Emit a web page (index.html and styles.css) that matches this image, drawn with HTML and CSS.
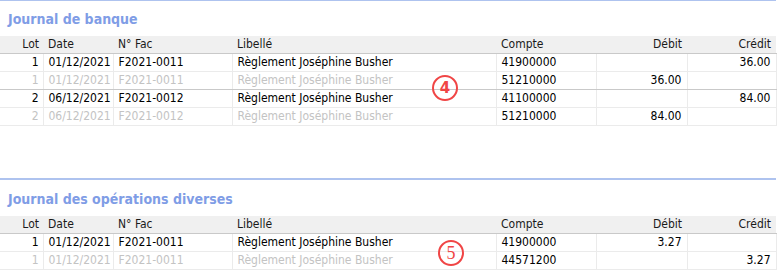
FILE: index.html
```html
<!DOCTYPE html>
<html lang="fr">
<head>
<meta charset="utf-8">
<title>Journaux</title>
<link rel="stylesheet" href="styles.css">
</head>
<body>
<div class="page">
  <section class="journal journal-first">
    <h2 class="title">Journal de banque</h2>
    <table class="grid">
      <colgroup>
        <col class="c-lot"><col class="c-date"><col class="c-fac"><col class="c-lib"><col class="c-cpt"><col class="c-deb"><col class="c-cre">
      </colgroup>
      <thead>
        <tr><th class="num">Lot</th><th>Date</th><th>N° Fac</th><th>Libellé</th><th>Compte</th><th class="num">Débit</th><th class="num">Crédit</th></tr>
      </thead>
      <tbody>
        <tr><td class="num">1</td><td>01/12/2021</td><td>F2021-0011</td><td>Règlement Joséphine Busher</td><td>41900000</td><td class="num"></td><td class="num">36.00</td></tr>
        <tr class="faded group-end"><td class="num">1</td><td>01/12/2021</td><td>F2021-0011</td><td>Règlement Joséphine Busher</td><td>51210000</td><td class="num">36.00</td><td class="num"></td></tr>
        <tr><td class="num">2</td><td>06/12/2021</td><td>F2021-0012</td><td>Règlement Joséphine Busher</td><td>41100000</td><td class="num"></td><td class="num">84.00</td></tr>
        <tr class="faded"><td class="num">2</td><td>06/12/2021</td><td>F2021-0012</td><td>Règlement Joséphine Busher</td><td>51210000</td><td class="num">84.00</td><td class="num"></td></tr>
      </tbody>
    </table>
    <span class="mark mark-4">4</span>
  </section>

  <section class="journal journal-second">
    <h2 class="title">Journal des opérations diverses</h2>
    <table class="grid">
      <colgroup>
        <col class="c-lot"><col class="c-date"><col class="c-fac"><col class="c-lib"><col class="c-cpt"><col class="c-deb"><col class="c-cre">
      </colgroup>
      <thead>
        <tr><th class="num">Lot</th><th>Date</th><th>N° Fac</th><th>Libellé</th><th>Compte</th><th class="num">Débit</th><th class="num">Crédit</th></tr>
      </thead>
      <tbody>
        <tr><td class="num">1</td><td>01/12/2021</td><td>F2021-0011</td><td>Règlement Joséphine Busher</td><td>41900000</td><td class="num">3.27</td><td class="num"></td></tr>
        <tr class="faded"><td class="num">1</td><td>01/12/2021</td><td>F2021-0011</td><td>Règlement Joséphine Busher</td><td>44571200</td><td class="num"></td><td class="num">3.27</td></tr>
      </tbody>
    </table>
    <span class="mark mark-5">5</span>
  </section>
</div>
</body>
</html>
```

FILE: styles.css
```css
html, body {
  margin: 0;
  padding: 0;
  background: #ffffff;
}

body {
  font-family: "DejaVu Sans Condensed", "DejaVu Sans", sans-serif;
  font-size: 12px;
  color: #000000;
  width: 778px;
  height: 272px;
  overflow: hidden;
}

.page {
  width: 776px;
}

.journal {
  position: relative;
  border-top: 2px solid #aec3ef;
}

.journal-first {
  margin-top: -1px;
}

.journal-second {
  margin-top: 52px;
}

.title {
  margin: 0 0 7px 0;
  padding: 8px 0 0 8px;
  height: 20px;
  line-height: 20px;
  font-size: 14px;
  font-weight: bold;
  color: #7f9de6;
}

.journal-second .title {
  padding-top: 9px;
}

.grid {
  width: 776px;
  border-collapse: collapse;
  table-layout: fixed;
}

.c-lot { width: 43px; }
.c-date { width: 70px; }
.c-fac { width: 119px; }
.c-lib { width: 264px; }
.c-cpt { width: 100px; }
.c-deb { width: 91px; }
.c-cre { width: 89px; }

.grid th,
.grid td {
  height: 17px;
  line-height: 17px;
  padding: 0 5px;
  text-align: left;
  white-space: nowrap;
  overflow: hidden;
}

.grid th {
  font-weight: normal;
  background: #f0f0f0;
  color: #1a1a1a;
  border-bottom: 1px solid #c9c9c9;
}

.grid td {
  border-bottom: 1px solid #ebebeb;
  border-left: 1px solid #ebebeb;
}

.grid td:first-child {
  border-left: none;
}

.grid td:last-child {
  border-right: 1px solid #ebebeb;
}

.grid .num {
  text-align: right;
}

.grid th.num:first-child,
.grid td.num:first-child {
  padding-right: 4px;
}

.faded td:nth-child(-n+4) {
  color: #c3c3c3;
}

.group-end td {
  border-bottom-color: #c9c9c9;
}

.mark {
  position: absolute;
  box-sizing: border-box;
  width: 26px;
  height: 26px;
  border: 2px solid #f04545;
  border-radius: 50%;
  color: #f04545;
  text-align: center;
}

.mark-4 {
  left: 432px;
  top: 74px;
  font-family: "DejaVu Sans", sans-serif;
  font-weight: bold;
  font-size: 15px;
  line-height: 22px;
}

.mark-5 {
  left: 438px;
  top: 60px;
  font-family: "Liberation Serif", serif;
  font-size: 18px;
  line-height: 22px;
}
```
